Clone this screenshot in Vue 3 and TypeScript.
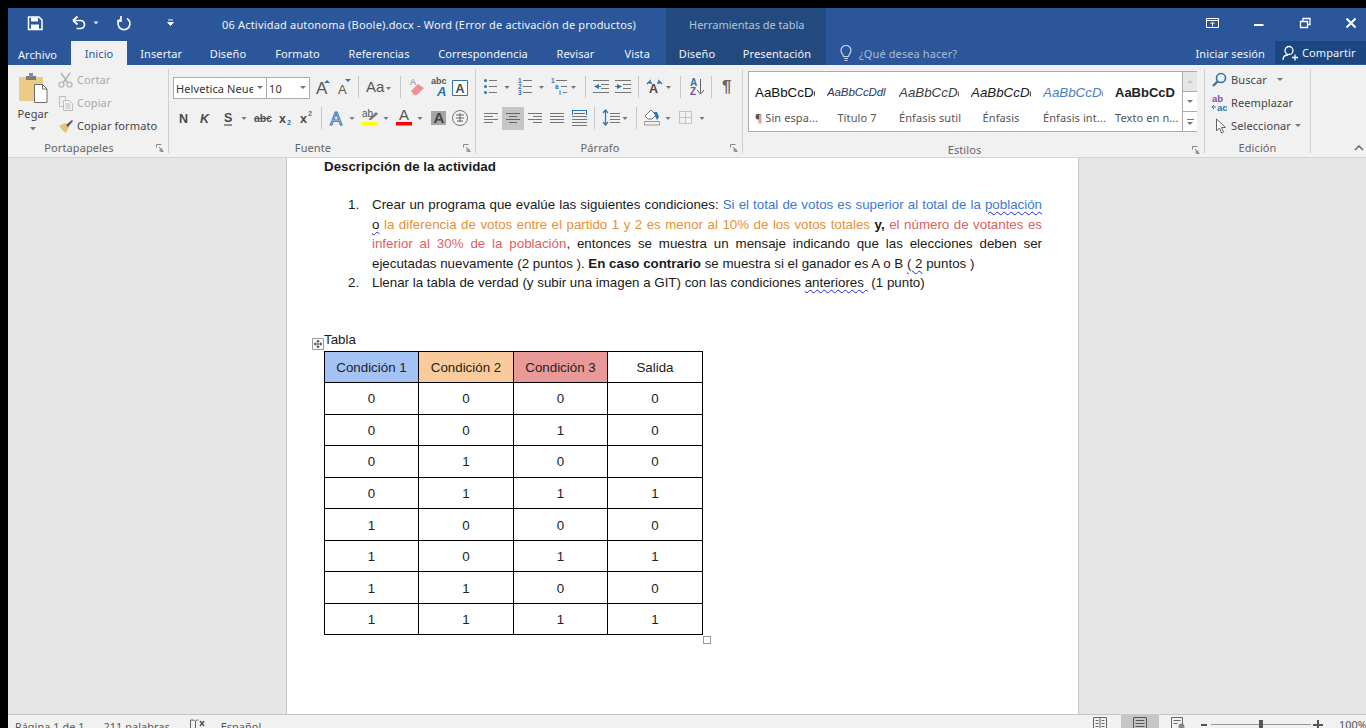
<script setup lang="ts">
const leftTabs = [
  { label: 'Insertar', w: 68.5 },
  { label: 'Diseño', w: 65 },
  { label: 'Formato', w: 74 },
  { label: 'Referencias', w: 89 },
  { label: 'Correspondencia', w: 119 },
  { label: 'Revisar', w: 66 },
  { label: 'Vista', w: 57.5 }
]
const styles = [
  { sample: 'AaBbCcDd', name: '¶ Sin espa...', kind: 'plain' },
  { sample: 'AaBbCcDdl', name: 'Título 7', kind: 'title' },
  { sample: 'AaBbCcDd', name: 'Énfasis sutil', kind: 'subtle' },
  { sample: 'AaBbCcDd', name: 'Énfasis', kind: 'em' },
  { sample: 'AaBbCcDd', name: 'Énfasis int...', kind: 'intense' },
  { sample: 'AaBbCcD', name: 'Texto en n...', kind: 'strong' }
]
const rows = [
  [0, 0, 0, 0], [0, 0, 1, 0], [0, 1, 0, 0], [0, 1, 1, 1],
  [1, 0, 0, 0], [1, 0, 1, 1], [1, 1, 0, 0], [1, 1, 1, 1]
]
</script>

<template>
  <div class="screen">
    <header class="top">
      <div class="top-left">
        <div class="title-row">
          <svg class="qat" width="214" height="33" viewBox="8 8 214 33" fill="none">
            <path d="M28.500 17h10.500l3 3v9.500h-13.500z" stroke="#fff" stroke-width="1.500" />
            <path d="M31 17.500h7v4h-7zM31 24.500h8v5h-8z" fill="#fff" />
            <path d="M73 20.500h7.500a4 4 0 0 1 0 8h-4M73 20.500l4.500-4M73 20.500l4.500 4" stroke="#fff" stroke-width="1.700" />
            <path d="M93.500 21.500h5l-2.500 3z" fill="#dfe7f3" />
            <path d="M121 18.500a6 6 0 1 0 6 0M121 16v5h-4" stroke="#eef2f8" stroke-width="1.800" />
            <path d="M168 20h5M167.500 22.500h6l-3 3z" stroke="#eef2f8" stroke-width="1" fill="#eef2f8" />
          </svg>
          <span class="doc-title">06 Actividad autonoma (Boole).docx - Word (Error de activación de productos)</span>
        </div>
        <nav class="tabs">
          <span class="tab file">Archivo</span>
          <span class="tab active">Inicio</span>
          <span v-for="t in leftTabs" :key="t.label" class="tab" :style="{ width: t.w + 'px' }">{{ t.label }}</span>
        </nav>
      </div>
      <div class="top-context">
        <div class="context-title">Herramientas de tabla</div>
        <nav class="tabs context-tabs">
          <span class="tab ctx-a">Diseño</span>
          <span class="tab ctx-b">Presentación</span>
        </nav>
      </div>
      <div class="top-right">
        <div class="win-row">
          <svg width="176" height="33" viewBox="1190 8 176 33" fill="none">
            <path d="M1206.500 18.500h12v9h-12zM1206.500 20.500h12" stroke="#fff" />
            <path d="M1212.500 26.500v-4M1210.500 24l2-2 2 2" stroke="#fff" />
            <path d="M1254 25h9.500" stroke="#fff" stroke-width="2" />
            <path d="M1300.500 21.500h7v6h-7zM1303 21v-2.500h7v6h-2.500" stroke="#fff" stroke-width="1.300" />
            <path d="M1346.500 18.500l9 9M1355.500 18.500l-9 9" stroke="#fff" stroke-width="2" />
          </svg>
        </div>
        <div class="right-tabs">
          <svg class="bulb" width="14" height="17" viewBox="0 0 14 17" fill="none">
            <path d="M4.500 11.500c0-2-2.500-3-2.500-6a5 5 0 0 1 10 0c0 3-2.500 4-2.500 6z" stroke="#c8d4e6" stroke-width="1.200" />
            <path d="M5 13.500h4M5.500 15.500h3" stroke="#c8d4e6" stroke-width="1.200" />
          </svg>
          <span class="tell">¿Qué desea hacer?</span>
          <span class="signin">Iniciar sesión</span>
          <span class="share">
            <svg width="16" height="16" viewBox="0 0 16 16" fill="none">
              <circle cx="7" cy="5.500" r="4" stroke="#fff" stroke-width="1.300" />
              <path d="M1 15c0-3 2-5 5-5M10 12.500h6M13 9.500v6" stroke="#fff" stroke-width="1.300" />
            </svg>
            Compartir
          </span>
        </div>
      </div>
    </header>

    <section class="ribbon">
      <div class="group g-clip">
        <div class="body clip">
          <div class="paste">
            <svg width="29" height="32" viewBox="21 72 29 32" fill="none">
              <path d="M21 77h24v24H21z" fill="#eccb84" />
              <path d="M28 76h10v4H28z" fill="#7b7b7b" />
              <path d="M31 73h4v4h-4z" fill="#8a8a8a" />
              <path d="M36.500 84.500h8l4.500 4.500v13.500H36.500z" fill="#fff" stroke="#6d6d6d" />
              <path d="M44.500 84.500V89H49" stroke="#6d6d6d" />
            </svg>
            <span class="paste-label">Pegar</span>
            <svg class="paste-caret" width="6" height="4" viewBox="0 0 6 4"><path d="M0 0h6L3 3.500z" fill="#777" /></svg>
          </div>
          <div class="clip-actions">
            <div class="act off">
              <svg width="16" height="16" viewBox="0 0 16 16" fill="none">
                <path d="M3 1l7 10M12 1L5 11" stroke="#b2b2b2" stroke-width="1.500" />
                <circle cx="3.500" cy="12.500" r="2.500" stroke="#b2b2b2" stroke-width="1.200" />
                <circle cx="11.500" cy="12.500" r="2.500" stroke="#b2b2b2" stroke-width="1.200" />
              </svg>
              Cortar
            </div>
            <div class="act off">
              <svg width="16" height="16" viewBox="0 0 16 16" fill="none" stroke="#bcbcbc">
                <path d="M1.500 1.500h6v3M1.500 1.500v10h4" />
                <path d="M5.500 5.500h6l3 3v7h-9zM7.500 9h5M7.500 11h5M7.500 13h5" />
              </svg>
              Copiar
            </div>
            <div class="act">
              <svg width="16" height="16" viewBox="0 0 16 16" fill="none">
                <path d="M1 8l6-3 4 4-3 6c-2-1-5-4-7-7z" fill="#e9c27a" />
                <path d="M8 7l6-5 1 1-5 6z" fill="#555" />
              </svg>
              Copiar formato
            </div>
          </div>
        </div>
        <div class="lbl"><span>Portapapeles</span>
          <svg class="launch" width="8" height="8" viewBox="0 0 8 8" fill="none"><path d="M.5 3.500v-3h5M7.500 7.500h-3M3 3l4 4" stroke="#888" /><path d="M3.500 4.500h3v3h-3z" fill="#999" /></svg>
        </div>
      </div>

      <div class="group g-font">
        <div class="body stack">
          <div class="font-top">
            <span class="combo name">Helvetica Neue<i class="arrow"></i></span>
            <span class="combo size">10<i class="arrow"></i></span>
            <svg width="165" height="24" viewBox="310 76 165 24" fill="none">
              <text x="316" y="94" class="gl g15">A</text>
              <path d="M324 83l3-3 3 3z" fill="#2e75b6" />
              <text x="338" y="94" class="gl g12">A</text>
              <path d="M345 79h6l-3 3z" fill="#2e75b6" />
              <path d="M358.500 76v22M400.500 76v22" stroke="#c6c6c6" />
              <text x="366" y="92" class="gl g13">Aa</text>
              <path d="M386 87h5l-2.500 3z" fill="#777" />
              <text x="410" y="85" class="gl g8">A</text>
              <path d="M411 91l7-7 6 4-7 7h-3z" fill="#ee8f9a" />
              <text x="431" y="84" class="gl g9b">abc</text>
              <text x="437" y="96" class="gl g12bi">A</text>
              <path d="M452.500 80.500h15v15h-15z" stroke="#2e75b6" fill="#fff" />
              <text x="455.500" y="92.500" class="gl g12b">A</text>
            </svg>
          </div>
          <svg class="row-svg" width="305" height="24" viewBox="173 107 305 24" fill="none">
            <text x="179" y="123" class="gl g12b">N</text>
            <text x="200" y="123" class="gl g12bi2">K</text>
            <text x="224" y="122" class="gl g12b">S</text>
            <path d="M224 125h8" stroke="#555" stroke-width="1.200" />
            <path d="M241.500 117h5l-2.500 3z" fill="#777" />
            <text x="254" y="122" class="gl g10b">abc</text>
            <path d="M254 118.500h16" stroke="#555" />
            <text x="279" y="123" class="gl g12b">x</text>
            <text x="287" y="125" class="gl g7b">2</text>
            <text x="300" y="123" class="gl g12b">x</text>
            <text x="308" y="116" class="gl g7k">2</text>
            <path d="M321.500 107v22" stroke="#c6c6c6" />
            <text x="330" y="125" class="gl g17o">A</text>
            <path d="M349.500 117h5l-2.500 3z" fill="#777" />
            <text x="362" y="117" class="gl g9">ab</text>
            <path d="M369 119l7-7 2 2-7 6h-2z" fill="#777" />
            <path d="M362 122h16v3.500h-16z" fill="#ffff00" />
            <path d="M383.500 117h5l-2.500 3z" fill="#777" />
            <text x="399" y="120" class="gl g13">A</text>
            <path d="M396 122h16v3.500h-16z" fill="#ff0000" />
            <path d="M417.500 117h5l-2.500 3z" fill="#777" />
            <path d="M431 111h15v14h-15z" fill="#a6a6a6" />
            <text x="433.500" y="123" class="gl g14b">A</text>
            <circle cx="460" cy="118" r="7.500" stroke="#777" />
            <path d="M456 115h8M456 118h8M460 113v9M457 121h6" stroke="#666" />
          </svg>
        </div>
        <div class="lbl"><span>Fuente</span>
          <svg class="launch" width="8" height="8" viewBox="0 0 8 8" fill="none"><path d="M.5 3.500v-3h5M7.500 7.500h-3M3 3l4 4" stroke="#888" /><path d="M3.500 4.500h3v3h-3z" fill="#999" /></svg>
        </div>
      </div>

      <div class="group g-para">
        <div class="body stack">
          <svg class="row-svg" width="260" height="24" viewBox="480 76 260 24" fill="none">
            <g fill="#2e75b6"><circle cx="485.500" cy="80.500" r="1.500" /><circle cx="485.500" cy="86.500" r="1.500" /><circle cx="485.500" cy="92.500" r="1.500" /></g>
            <path d="M489 80.500h8M489 86.500h8M489 92.500h8" stroke="#777" />
            <path d="M504.500 86h5l-2.500 3z" fill="#777" />
            <g class="tiny"><text x="518" y="83">1</text><text x="518" y="89">2</text><text x="518" y="95">3</text></g>
            <path d="M523 80.500h9M523 86.500h9M523 92.500h9" stroke="#777" />
            <path d="M539 86h5l-2.500 3z" fill="#777" />
            <g class="tiny"><text x="551" y="83">1</text><text x="555" y="89">a</text><text x="559" y="95">i</text></g>
            <path d="M556 80.500h11M561 86.500h6M563 92.500h4" stroke="#777" />
            <path d="M571 86h5l-2.500 3z" fill="#777" />
            <path d="M585.500 76v22M638.500 76v22M680.500 76v22M711.500 76v22" stroke="#c6c6c6" />
            <path d="M593 80.500h16M601 84.500h8M601 88.500h8M593 92.500h16" stroke="#777" />
            <path d="M599 84l-5 2.500 5 2.500z" fill="#2e75b6" /><path d="M599 86.500h2" stroke="#2e75b6" />
            <path d="M615 80.500h16M623 84.500h8M623 88.500h8M615 92.500h16" stroke="#777" />
            <path d="M617 84l5 2.500-5 2.500z" fill="#2e75b6" /><path d="M615 86.500h3" stroke="#2e75b6" />
            <path d="M647 84l3-3v2h2M662 84l-3-3v2h-2" stroke="#2e75b6" stroke-width="1.500" />
            <text x="649" y="93" class="gl g12b">A</text>
            <path d="M666 86h5l-2.500 3z" fill="#777" />
            <text x="690" y="86" class="gl g9bb">A</text>
            <text x="690" y="95" class="gl g9bp">Z</text>
            <path d="M700.500 79v15M697 90l3.500 4 3.500-4" stroke="#666" />
            <text x="722" y="92" class="gl g16p">¶</text>
          </svg>
          <svg class="row-svg" width="260" height="24" viewBox="480 107 260 24" fill="none">
            <path d="M502 107h22v23h-22z" fill="#c6c6c6" />
            <path d="M484 113.500h14M484 116.500h9M484 119.500h14M484 122.500h9" stroke="#777" />
            <path d="M506 113.500h14M509 116.500h8M506 119.500h14M509 122.500h8" stroke="#666" />
            <path d="M528 113.500h14M533 116.500h9M528 119.500h14M533 122.500h9" stroke="#777" />
            <path d="M550 113.500h14M550 116.500h14M550 119.500h14M550 122.500h14" stroke="#777" />
            <path d="M572 110.500h15M572.500 111v4M586.500 111v4M574 113.500h11" stroke="#2e75b6" />
            <path d="M572 116.500h15M572 119.500h15M572 122.500h15M572 125.500h15" stroke="#777" />
            <path d="M594.500 107v22M636.500 107v22" stroke="#c6c6c6" />
            <path d="M605.500 110v15M603 113l2.500-3 2.500 3M603 122l2.500 3 2.500-3" stroke="#2e75b6" stroke-width="1.200" />
            <path d="M610 113.500h10M610 116.500h10M610 119.500h10M610 122.500h10" stroke="#777" />
            <path d="M622.500 117h5l-2.500 3z" fill="#777" />
            <path d="M645 116l6-6 5 5-4 4h-4z" stroke="#777" fill="#fff" />
            <path d="M654 112h3l2 5-2 3-2-4z" fill="#2e75b6" />
            <path d="M644.500 121.500h15v3.500h-15z" stroke="#999" fill="#f1f1f1" />
            <path d="M665.500 117h5l-2.500 3z" fill="#777" />
            <path d="M679.500 111.500h12v12h-12zM679.500 117.500h12M685.500 111.500v12" stroke="#999" stroke-dasharray="1 1" />
            <path d="M699.500 117h5l-2.500 3z" fill="#777" />
          </svg>
        </div>
        <div class="lbl"><span>Párrafo</span>
          <svg class="launch" width="8" height="8" viewBox="0 0 8 8" fill="none"><path d="M.5 3.500v-3h5M7.500 7.500h-3M3 3l4 4" stroke="#888" /><path d="M3.500 4.500h3v3h-3z" fill="#999" /></svg>
        </div>
      </div>

      <div class="group g-styles">
        <div class="body gallery">
          <div v-for="s in styles" :key="s.name" class="style-item">
            <div class="sample" :class="s.kind">{{ s.sample }}</div>
            <div class="style-name">{{ s.name }}</div>
          </div>
          <div class="scroller">
            <span class="sb sb-up"><i class="tri up"></i></span>
            <span class="sb"><i class="tri"></i></span>
            <span class="sb sb-more"><b></b><i class="tri"></i></span>
          </div>
        </div>
        <div class="lbl"><span>Estilos</span>
          <svg class="launch" width="8" height="8" viewBox="0 0 8 8" fill="none"><path d="M.5 3.500v-3h5M7.500 7.500h-3M3 3l4 4" stroke="#888" /><path d="M3.500 4.500h3v3h-3z" fill="#999" /></svg>
        </div>
      </div>

      <div class="group g-edit">
        <div class="body edit">
          <div class="act">
            <svg width="16" height="16" viewBox="0 0 16 16" fill="none">
              <circle cx="10" cy="6" r="4.500" stroke="#2e75b6" stroke-width="1.600" />
              <path d="M6.500 9.500L2 14" stroke="#2e75b6" stroke-width="2.400" />
            </svg>
            Buscar<i class="tri wide"></i>
          </div>
          <div class="act">
            <svg width="16" height="17" viewBox="0 0 16 17">
              <text x="1" y="7.500" class="gl g11ab">ab</text>
              <text x="6" y="16.500" class="gl g11ac">ac</text>
              <path d="M1 13h4M1 13l2-2M1 13l2 2" stroke="#2e75b6" fill="none" />
            </svg>
            Reemplazar
          </div>
          <div class="act">
            <svg width="16" height="16" viewBox="0 0 16 16" fill="none">
              <path d="M5.500 1v12l3-3 2 5 2-1-2-4.500h4z" stroke="#666" fill="#fff" />
            </svg>
            Seleccionar<i class="tri tight"></i>
          </div>
        </div>
        <div class="lbl center"><span>Edición</span></div>
      </div>

      <div class="collapse">
        <svg width="10" height="6" viewBox="0 0 10 6" fill="none"><path d="M1 5l4-4 4 4" stroke="#666" stroke-width="1.500" /></svg>
      </div>
    </section>

    <main class="canvas">
      <article class="page">
        <h1 class="heading">Descripción de la actividad</h1>
        <div class="list">
          <div class="item">
            <span class="num">1.</span>
            <div class="content">
              <div class="line just">Crear un programa que evalúe las siguientes condiciones: <span class="blue">Si el total de votos es superior al total de la <span class="sq">población</span></span></div>
              <div class="line just"><span class="sq">o</span> <span class="orange">la diferencia de votos entre el partido 1 y 2 es menor al 10% de los votos totales</span> <b>y,</b> <span class="red">el número de votantes es</span></div>
              <div class="line just"><span class="red">inferior al 30% de la población</span>, entonces se muestra un mensaje indicando que las elecciones deben ser</div>
              <div class="line">ejecutadas nuevamente (2 puntos ). <b>En caso contrario</b> se muestra si el ganador es A o B <span class="sq">( 2</span> puntos )</div>
            </div>
          </div>
          <div class="item">
            <span class="num">2.</span>
            <div class="content">
              <div class="line">Llenar la tabla de verdad (y subir una imagen a GIT) con las condiciones <span class="sq">anteriores&nbsp;</span> (1 punto)</div>
            </div>
          </div>
        </div>
        <p class="caption">Tabla</p>
        <div class="table-wrap">
          <svg class="move" width="12" height="12" viewBox="0 0 12 12" fill="#fff">
            <path d="M.5.500h11v11H.500z" stroke="#999" />
            <path d="M6 2.500v7M2.500 6h7M6 2L4.800 3.500h2.400zM6 10L4.800 8.500h2.400zM2 6l1.500-1.200v2.400zM10 6L8.500 4.800v2.400z" stroke="#444" stroke-width=".8" />
          </svg>
          <table class="truth">
            <colgroup>
              <col class="w94" />
              <col class="w95" />
              <col class="w94" />
              <col class="w95" />
            </colgroup>
            <thead>
              <tr>
                <th class="c1">Condición 1</th>
                <th class="c2">Condición 2</th>
                <th class="c3">Condición 3</th>
                <th>Salida</th>
              </tr>
            </thead>
            <tbody>
              <tr v-for="(r, i) in rows" :key="i">
                <td v-for="(v, j) in r" :key="j">{{ v }}</td>
              </tr>
            </tbody>
          </table>
          <span class="resize"></span>
        </div>
      </article>
    </main>

    <footer class="status">
      <div class="status-left">
        <span class="st-page">Página 1 de 1</span>
        <span class="st-words">211 palabras</span>
        <svg class="st-proof" width="16" height="14" viewBox="0 0 16 14" fill="none">
          <path d="M1.500 1v11c2 0 4 0 5 1V2C5.500 1 3.500 1 1.500 1zM6.500 2c1-1 2-1 3-1" stroke="#666" />
          <path d="M11 2l4 5M15 2l-4 5" stroke="#555" stroke-width="1.500" />
        </svg>
        <span>Español</span>
      </div>
      <div class="status-right">
        <svg class="view-read" width="14" height="14" viewBox="0 0 14 14" fill="none">
          <path d="M.5 1.500h13v12H.500zM7 1.500v12M2.500 4.500h3M2.500 7.500h3M2.500 10.500h3M8.500 4.500h3M8.500 7.500h3M8.500 10.500h3" stroke="#666" />
        </svg>
        <span class="view-print">
          <svg width="14" height="14" viewBox="0 0 14 14" fill="none">
            <path d="M.5 1.500h13v12H.500zM2.500 4.500h9M2.500 7.500h9M2.500 10.500h9" stroke="#555" />
          </svg>
        </span>
        <svg class="view-web" width="14" height="14" viewBox="0 0 14 14" fill="none">
          <path d="M.5 1.500h11v12H.500zM2.500 4.500h7M2.500 7.500h4" stroke="#666" />
          <circle cx="10.500" cy="10.500" r="3" fill="#888" />
        </svg>
        <span class="zoom-minus"></span>
        <span class="slider"><i></i></span>
        <span class="zoom-plus"></span>
        <span class="zoom-value">100%</span>
      </div>
    </footer>
  </div>
</template>

<style scoped>
.screen {
  width: 1366px;
  height: 728px;
  overflow: hidden;
  box-sizing: border-box;
  padding: 8px 0 0 8px;
  background: #000;
  display: flex;
  flex-direction: column;
  font-family: "Noto Sans", sans-serif;
  font-size: 11px;
  letter-spacing: .1px;
  color: #555;
}
.top { display: flex; height: 57px; flex: none; background: #2b579a; color: #fff; }
.top-left { width: 658px; flex: none; }
.title-row { display: flex; height: 33px; align-items: center; }
.qat { flex: none; }
.doc-title { color: #eef2f8; white-space: nowrap; letter-spacing: .19px; }
.tabs { display: flex; height: 24px; align-items: stretch; }
.tab {
  display: flex; align-items: center; justify-content: center; flex: none;
  color: #f0f4fa; white-space: nowrap;
}
.tab.file { width: 63px; padding: 2px 4px 0 0; box-sizing: border-box; }
.tab.active { width: 56px; background: #f1f1f1; color: #2b579a; }
.top-context { width: 160px; flex: none; background: #234a7e; }
.context-title { height: 33px; display: flex; align-items: center; padding-left: 23px; color: #b4c4dc; letter-spacing: 0; }
.ctx-a { width: 62px; }
.ctx-b { width: 98px; }
.top-right { flex: 1; min-width: 0; }
.win-row { height: 33px; display: flex; justify-content: flex-end; }
.right-tabs { display: flex; height: 24px; align-items: center; }
.bulb { margin-left: 13px; flex: none; }
.tell { margin-left: 6px; color: #a9bcd8; }
.signin { margin-left: auto; color: #f0f4fa; }
.share {
  margin-left: 10px; width: 91px; height: 23px; align-self: flex-start; box-sizing: border-box;
  background: #1c4680; display: flex; align-items: center; gap: 4px; padding-left: 7px; color: #f0f4fa;
}
.ribbon {
  flex: none; height: 93px; box-sizing: border-box; background: #f1f1f1;
  border-bottom: 1px solid #d4d4d4; display: flex; padding-top: 4px;
}
.group {
  display: flex; flex-direction: column; height: 84px; box-sizing: border-box;
  border-right: 1px solid #d0d0d0; flex: none;
}
.body { height: 74px; box-sizing: border-box; }
.lbl {
  height: 10px; margin-top: 2px; display: flex; align-items: center;
  font-size: 11px; color: #666; line-height: 10px;
}
.lbl span { flex: 1; text-align: center; }
.launch { flex: none; margin: 0 4px 0 6px; }
.g-clip { width: 161px; }
.g-font { width: 307px; }
.g-para { width: 267px; }
.g-styles { width: 462px; }
.g-edit { width: 106px; }
.clip { display: flex; }
.paste { width: 50px; display: flex; flex-direction: column; align-items: center; padding-top: 3px; box-sizing: border-box; }
.paste-label { margin-top: 0; height: 20px; line-height: 20px; color: #444; }
.paste-caret { margin-top: 3px; }
.clip-actions, .edit { display: flex; flex-direction: column; margin-top: -1px; }
.act { height: 23px; display: flex; align-items: center; gap: 3px; white-space: nowrap; color: #444; }
.act svg { flex: none; }
.act.off { color: #aaa; }
.stack { padding: 7px 0 0 4px; display: flex; flex-direction: column; gap: 7px; }
.row-svg { display: block; flex: none; }
.font-top { display: flex; height: 24px; align-items: flex-start; }
.combo {
  box-sizing: border-box; height: 22px; margin-top: 1px; background: #fff; border: 1px solid #ababab;
  display: flex; align-items: center; color: #333; overflow: hidden; padding-left: 2px; position: relative;
}
.combo.name { width: 94px; white-space: nowrap; }
.combo.size { width: 43px; border-left: 0; }
.arrow {
  position: absolute; right: 0; top: 0; bottom: 0; width: 13px; background: #fff;
}
.arrow::after {
  content: ""; position: absolute; left: 4px; top: 8px; width: 0; height: 0;
  border-left: 3px solid transparent; border-right: 3px solid transparent; border-top: 3px solid #777;
}
.gallery {
  margin: 2px 0 11px 5px; width: 449px; height: 61px; background: #fff; border: 1px solid #ababab;
  display: flex; flex: none;
}
.style-item { width: 72px; flex: none; box-sizing: border-box; padding: 0 6px; text-align: center; }
.sample {
  height: 37px; line-height: 41px; font-family: "Liberation Sans", sans-serif; font-size: 13.330px;
  letter-spacing: 0; color: #111; overflow: hidden; white-space: nowrap; text-align: left;
}
.sample.title { font-style: italic; color: #1f3864; font-size: 11.500px; letter-spacing: -.1px; }
.sample.subtle { font-style: italic; color: #404040; }
.sample.em { font-style: italic; color: #222; }
.sample.intense { font-style: italic; color: #4a7ebb; }
.sample.strong { font-weight: bold; color: #222; font-size: 13px; }
.style-name { color: #555; white-space: nowrap; text-align: center; line-height: 18px; }
.scroller { width: 15px; margin-left: 1px; display: flex; flex-direction: column; flex: none; }
.sb { flex: 1; border-left: 1px solid #ababab; border-bottom: 1px solid #ababab; background: #fff; display: flex; align-items: center; justify-content: center; flex-direction: column; gap: 2px; }
.sb:last-child { border-bottom: 0; }
.sb-up { background: #e6e6e6; }
.sb-up .tri { opacity: .4; }
.sb-more b { display: block; width: 7px; height: 1px; background: #777; }
.tri { display: inline-block; width: 0; height: 0; border-left: 3.500px solid transparent; border-right: 3.500px solid transparent; border-top: 3.500px solid #777; }
.tri.up { border-top: 0; border-bottom: 3.500px solid #999; }
.tri.wide { margin-left: 6px; }
.tri.tight { margin-left: 0; }
.edit { padding-left: 6px; }
.edit .act { gap: 4px; }
.collapse { flex: 1; display: flex; justify-content: flex-end; align-items: flex-end; padding: 0 2px 2px 0; height: 84px; box-sizing: border-box; }

.gl { font-family: "Liberation Sans", sans-serif; fill: #555; letter-spacing: 0; }
.g15 { font-size: 17px; }
.g12 { font-size: 13px; }
.g13 { font-size: 15px; }
.g9 { font-size: 10px; }
.g8 { font-size: 9px; fill: #888; }
.g9b { font-size: 9px; font-weight: bold; }
.g12bi { font-size: 13px; font-weight: bold; font-style: italic; fill: #2e75b6; }
.g12b { font-size: 12.500px; font-weight: bold; fill: #4a4a4a; }
.g12bi2 { font-size: 12.500px; font-weight: bold; font-style: italic; fill: #4a4a4a; }
.g10b { font-size: 10.500px; font-weight: bold; }
.g7b { font-size: 7px; font-weight: bold; fill: #2e75b6; }
.g7k { font-size: 7px; font-weight: bold; fill: #2e75b6; }
.g17o { font-size: 18px; fill: #dbe8f6; stroke: #2e75b6; stroke-width: .9px; }
.g14b { font-size: 15px; font-weight: bold; fill: #444; }
.g9bb { font-size: 10px; font-weight: bold; fill: #2e75b6; }
.g9bp { font-size: 10px; font-weight: bold; fill: #7f4fa8; }
.g16p { font-size: 17px; font-weight: bold; fill: #666; }
.g11ab { font-size: 9.500px; font-weight: bold; fill: #7f4fa8; }
.g11ac { font-size: 9.500px; font-weight: bold; fill: #2e75b6; }
.tiny text { font: bold 6.500px "Liberation Sans", sans-serif; fill: #2e75b6; }

.canvas {
  flex: none; height: 556px; background: #e6e6e6; padding-left: 278px; overflow: hidden;
}
.page {
  width: 793px; height: 556px; box-sizing: border-box; background: #fff;
  border-left: 1px solid #c6c6c6; border-right: 1px solid #c6c6c6;
  padding: 0 0 0 37px; font-family: "Liberation Sans", sans-serif; font-size: 13.330px; letter-spacing: 0; color: #1a1a1a;
}
.heading { margin: 0; font-size: 13.330px; line-height: 17px; font-weight: bold; }
.list { margin-top: 20px; }
.item { display: flex; width: 718px; }
.num { width: 48px; flex: none; padding-left: 24px; box-sizing: border-box; line-height: 19.500px; }
.content { width: 670px; flex: none; }
.line { line-height: 19.500px; white-space: nowrap; }
.line.just { white-space: normal; text-align: justify; text-align-last: justify; }
.blue { color: #3d78d8; }
.orange { color: #ea9035; }
.red { color: #e06060; }
.sq { text-decoration: underline wavy #2424d8 1px; text-underline-offset: 2px; }
.caption { margin: 37px 0 1px; line-height: 20px; }
.table-wrap { position: relative; width: 379px; }
.move { position: absolute; left: -12px; top: -13px; }
.truth { border-collapse: collapse; table-layout: fixed; width: 379px; text-align: center; color: #222; }
.w94 { width: 94px; }
.w95 { width: 95px; }
.truth th, .truth td { border: 1px solid #000; height: 31.560px; padding: 1px 0 0; font-weight: normal; font-size: 13.330px; box-sizing: border-box; }
.c1 { background: #a4c2f4; }
.c2 { background: #f9cb9c; }
.c3 { background: #ea9999; }
.resize { position: absolute; right: -8px; bottom: -9px; width: 6px; height: 6px; border: 1px solid #999; background: #fff; }

.status {
  flex: none; height: 22px; box-sizing: border-box; background: #f1f1f1; border-top: 1px solid #c6c6c6;
  display: flex; justify-content: space-between; font-size: 10.800px; color: #555;
}
.status-left { display: flex; align-items: center; padding-left: 7px; height: 22px; }
.st-words { margin-left: 19px; }
.st-proof { margin: 0 16px 0 19px; }
.status-right { display: flex; align-items: flex-start; height: 22px; }
.view-read { margin-top: 1px; }
.view-print { margin: 0 12px 0 14px; width: 38px; height: 22px; background: #c6c6c6; display: flex; justify-content: center; padding-top: 1px; box-sizing: border-box; }
.view-web { margin-top: 1px; }
.zoom-minus { width: 6px; height: 2px; background: #555; margin: 9px 4px 0 16px; }
.slider { width: 100px; height: 1px; background: #999; margin-top: 9px; position: relative; }
.slider i { position: absolute; left: 48px; top: -4px; width: 4px; height: 9px; background: #555; }
.zoom-plus { width: 10px; height: 10px; margin: 5px 16px 0 2px; background: linear-gradient(#555, #555) center/10px 2px no-repeat, linear-gradient(#555, #555) center/2px 10px no-repeat; }
.zoom-value { width: 27px; white-space: nowrap; line-height: 20px; }
</style>
